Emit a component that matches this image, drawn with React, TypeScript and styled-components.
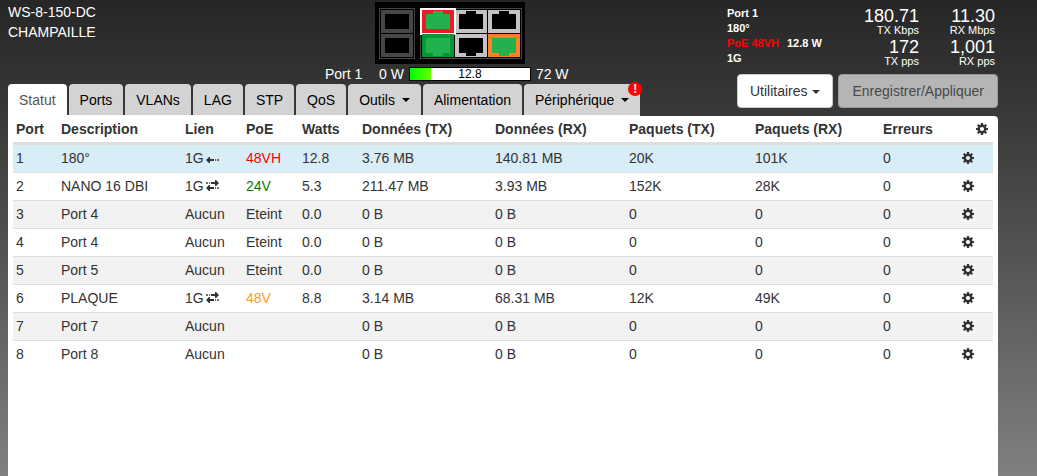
import React from "react";
import styled, { createGlobalStyle } from "styled-components";

const GlobalStyle = createGlobalStyle`
  *, *::before, *::after { box-sizing: border-box; }
  html { height: 100%; }
  body {
    margin: 0;
    min-height: 100%;
    background: linear-gradient(to bottom, #262626 0%, #3a3a3a 25%, #525252 52%, #808080 100%) fixed;
    color: #333;
    font-family: "Liberation Sans", Arial, Helvetica, sans-serif;
    font-size: 14px;
    line-height: 20px;
  }
`;

const Page = styled.div`
  display: flex;
  flex-direction: column;
  min-height: 100vh;
  padding: 0 39px 0 8px;
`;

const Header = styled.header`
  display: flex;
  justify-content: space-between;
  color: #fff;
`;

const HeaderMain = styled.div`
  display: flex;
  flex-direction: column;
  justify-content: space-between;
`;

const HeaderTop = styled.div`
  display: flex;
  padding-top: 2px;
`;

const Device = styled.div`
  flex: 0 0 317px;
`;

const PortMap = styled.svg`
  display: block;
  margin-left: 50px;
`;

const GaugeRow = styled.div`
  display: flex;
  align-items: center;
  gap: 5px;
`;

const GaugePort = styled.span`
  width: 49px;
`;

const Gauge = styled.div`
  position: relative;
  width: 122px;
  height: 14px;
  border: 1px solid #000;
  background: #fff;
`;

const GaugeFill = styled.div`
  height: 100%;
  background: linear-gradient(to right, #00ff00, #66ff00);
`;

const GaugeValue = styled.span`
  position: absolute;
  inset: 0;
  color: #000;
  font-size: 12px;
  line-height: 12px;
  text-align: center;
`;

const Tabs = styled.nav`
  display: flex;
  gap: 2px;
  border-bottom: 1px solid #fff;
`;

const Tab = styled.a<{ $active?: boolean }>`
  position: relative;
  display: flex;
  align-items: center;
  height: 31px;
  padding: 0 11px;
  border-radius: 4px 4px 0 0;
  background: ${(p) => (p.$active ? "#fff" : "#d3d3d3")};
  color: ${(p) => (p.$active ? "#555" : "#000")};
  text-decoration: none;
  white-space: nowrap;
`;

const Caret = styled.span<{ $gap: number }>`
  display: inline-block;
  margin-left: ${(p) => p.$gap}px;
  border-top: 4px solid currentColor;
  border-left: 4px solid transparent;
  border-right: 4px solid transparent;
  vertical-align: middle;
`;

const Alert = styled.span`
  position: absolute;
  top: -2px;
  right: -2px;
  width: 14px;
  height: 14px;
  border-radius: 50%;
  background: #f00;
  color: #fff;
  font-size: 12px;
  font-weight: bold;
  line-height: 14px;
  text-align: center;
`;

const Aside = styled.div`
  flex: 0 0 271px;
  display: flex;
  flex-direction: column;
  gap: 6px;
  padding: 6px 0 8px;
`;

const Summary = styled.div`
  display: flex;
  padding-right: 3px;
`;

const PortInfo = styled.div`
  flex: 1;
  font-size: 11px;
  font-weight: bold;
  line-height: 15px;
`;

const PoeLabel = styled.span`
  margin-right: 8px;
  color: #f00;
`;

const Stats = styled.div`
  width: 76px;
  text-align: right;
`;

const StatValue = styled.div`
  font-size: 18px;
  line-height: 20px;
`;

const StatUnit = styled.div`
  margin-bottom: 3px;
  font-size: 11px;
  line-height: 8px;
`;

const Actions = styled.div`
  display: flex;
  justify-content: flex-end;
  gap: 5px;
`;

const Button = styled.button`
  height: 34px;
  padding: 0 12px;
  border: 1px solid #ccc;
  border-radius: 4px;
  background: #fff;
  color: #333;
  font: inherit;
  white-space: nowrap;

  &:disabled {
    padding: 0 13px;
    border-color: #999;
    background: #b5b5b5;
    color: #484848;
  }
`;

const Panel = styled.main`
  flex: 1;
  padding: 0 5px;
  border-top-right-radius: 4px;
  background: #fff;
`;

const Table = styled.table`
  width: 100%;
  table-layout: fixed;
  border-collapse: separate;
  border-spacing: 0;
`;

const Th = styled.th`
  padding: 3px;
  border-bottom: 3px solid #ddd;
  text-align: left;
  white-space: nowrap;
`;

const GearTh = styled(Th)`
  padding-right: 5px;
  text-align: right;
`;

const Td = styled.td<{ $tone?: string }>`
  padding: 3px 3px 4px;
  border-top: 1px solid #ddd;
  color: ${(p) => p.$tone ?? "inherit"};
  white-space: nowrap;
`;

const Row = styled.tr<{ $selected?: boolean }>`
  background: ${(p) => (p.$selected ? "#d9edf7" : "#fff")};

  &:nth-child(odd) {
    background: ${(p) => (p.$selected ? "#d9edf7" : "#f2f2f2")};
  }

  &:first-child > td {
    border-top-width: 0;
  }
`;

const IconButton = styled.button`
  display: inline-block;
  height: 12px;
  padding: 0;
  border: 0;
  background: none;
  color: #333;
  line-height: 0;
  vertical-align: -1px;
`;

const LinkSvg = styled.svg`
  margin-left: 2px;
  vertical-align: baseline;
`;

function Gear({ label }: { label: string }) {
  return (
    <IconButton type="button" aria-label={label}>
      <svg width="12" height="12" viewBox="0 0 12 12" fill="none" stroke="currentColor">
        <circle cx="6" cy="6" r="3.3" strokeWidth="2.4" />
        <path
          strokeWidth="2.2"
          d="M6 0v2M6 10v2M0 6h2M10 6h2M1.7 1.7l1.5 1.5M8.8 8.8l1.5 1.5M1.7 10.3l1.5-1.5M8.8 3.2l1.5-1.5"
        />
      </svg>
    </IconButton>
  );
}

function Traffic({ both }: { both: boolean }) {
  return (
    <LinkSvg width="13" height="11" viewBox="0 0 13 11" fill="#333" aria-hidden="true">
      {both && (
        <>
          <path d="M0 2h2v2H0zM3 2h1v2H3z" opacity=".7" />
          <path d="M5 2h4V0h1l3 3-3 3H9V4H5z" />
        </>
      )}
      <path d="M8 7H4V5H3L0 8l3 3h1V9h4z" />
      <path d="M9 7h1v2H9zM11 7h2v2h-2z" opacity=".7" />
    </LinkSvg>
  );
}

type Jack = { x: number; y: number; frame: string; hole: string; selected?: boolean };

const jacks: Jack[] = [
  { x: 113, y: 8, frame: "#c3c3c3", hole: "#000" },
  { x: 80, y: 8, frame: "#c3c3c3", hole: "#000" },
  { x: 47, y: 8, frame: "#ed1c24", hole: "#22b14c", selected: true },
  { x: 47, y: 32, frame: "#009933", hole: "#22b14c" },
  { x: 80, y: 32, frame: "#c3c3c3", hole: "#000" },
  { x: 113, y: 32, frame: "#ff7f27", hole: "#22b14c" },
];

function Ports() {
  return (
    <PortMap width="150" height="62" viewBox="0 0 150 62" role="img" aria-label="Ports">
      <rect width="150" height="62" fill="#000" />
      <rect x="4.5" y="6.5" width="35" height="50" fill="none" stroke="#464646" />
      <rect x="45.5" y="6.5" width="101" height="50" fill="none" stroke="#464646" />
      {[8, 32].map((y) => (
        <g key={y}>
          <rect x="6" y={y} width="32" height="23" fill="#464646" />
          <rect x="10" y={y + 4} width="24" height="15" fill="#000" />
        </g>
      ))}
      {jacks.map((j) => (
        <g key={`${j.x}-${j.y}`}>
          {j.selected && <rect x={j.x - 2} y={j.y - 2} width="36" height="27" fill="#fff" />}
          <rect x={j.x} y={j.y} width="32" height="23" fill={j.frame} />
          <rect x={j.x + 4} y={j.y + 4} width="24" height="15" fill={j.hole} />
          <rect x={j.x + 11} y={j.y === 8 ? j.y + 1 : j.y + 19} width="10" height="3" fill={j.hole} />
        </g>
      ))}
    </PortMap>
  );
}

const tabs = [
  { name: "Statut", active: true },
  { name: "Ports" },
  { name: "VLANs" },
  { name: "LAG" },
  { name: "STP" },
  { name: "QoS" },
  { name: "Outils", menu: true },
  { name: "Alimentation" },
  { name: "Périphérique", menu: true, alert: true },
];

const columns: [string, number][] = [
  ["Port", 45],
  ["Description", 124],
  ["Lien", 61],
  ["PoE", 56],
  ["Watts", 60],
  ["Données (TX)", 133],
  ["Données (RX)", 134],
  ["Paquets (TX)", 126],
  ["Paquets (RX)", 128],
  ["Erreurs", 79],
];

type PortRow = {
  name: string;
  link: string;
  traffic?: "rx" | "both";
  poe: string;
  tone?: string;
  watts: string;
  data: [string, string];
  packets: [string, string];
};

const idle = (name: string, poe: string, watts: string): PortRow => ({
  name,
  link: "Aucun",
  poe,
  watts,
  data: ["0 B", "0 B"],
  packets: ["0", "0"],
});

const rows: PortRow[] = [
  { name: "180°", link: "1G", traffic: "rx", poe: "48VH", tone: "#f00", watts: "12.8", data: ["3.76 MB", "140.81 MB"], packets: ["20K", "101K"] },
  { name: "NANO 16 DBI", link: "1G", traffic: "both", poe: "24V", tone: "#008000", watts: "5.3", data: ["211.47 MB", "3.93 MB"], packets: ["152K", "28K"] },
  idle("Port 4", "Eteint", "0.0"),
  idle("Port 4", "Eteint", "0.0"),
  idle("Port 5", "Eteint", "0.0"),
  { name: "PLAQUE", link: "1G", traffic: "both", poe: "48V", tone: "#ff9c1a", watts: "8.8", data: ["3.14 MB", "68.31 MB"], packets: ["12K", "49K"] },
  idle("Port 7", "", ""),
  idle("Port 8", "", ""),
];

export default function App() {
  const watts = 12.8;
  const maxWatts = 72;
  return (
    <>
      <GlobalStyle />
      <Page>
        <Header>
          <HeaderMain>
            <HeaderTop>
              <Device>
                <div>WS-8-150-DC</div>
                <div>CHAMPAILLE</div>
              </Device>
              <div>
                <Ports />
                <GaugeRow>
                  <GaugePort>Port 1</GaugePort>
                  <span>0 W</span>
                  <Gauge role="meter" aria-label="Port 1" aria-valuemin={0} aria-valuemax={maxWatts} aria-valuenow={watts}>
                    <GaugeFill style={{ width: `${(watts / maxWatts) * 100}%` }} />
                    <GaugeValue>{watts}</GaugeValue>
                  </Gauge>
                  <span>72 W</span>
                </GaugeRow>
              </div>
            </HeaderTop>
            <Tabs>
              {tabs.map((t) => (
                <Tab key={t.name} href="#" $active={t.active}>
                  {t.name}
                  {t.menu && <Caret $gap={7} />}
                  {t.alert && <Alert>!</Alert>}
                </Tab>
              ))}
            </Tabs>
          </HeaderMain>
          <Aside>
            <Summary>
              <PortInfo>
                <div>Port 1</div>
                <div>180°</div>
                <div>
                  <PoeLabel>PoE 48VH</PoeLabel>12.8 W
                </div>
                <div>1G</div>
              </PortInfo>
              <Stats>
                <StatValue>180.71</StatValue>
                <StatUnit>TX Kbps</StatUnit>
                <StatValue>172</StatValue>
                <StatUnit>TX pps</StatUnit>
              </Stats>
              <Stats>
                <StatValue>11.30</StatValue>
                <StatUnit>RX Mbps</StatUnit>
                <StatValue>1,001</StatValue>
                <StatUnit>RX pps</StatUnit>
              </Stats>
            </Summary>
            <Actions>
              <Button type="button">
                Utilitaires
                <Caret $gap={5} />
              </Button>
              <Button type="button" disabled>
                Enregistrer/Appliquer
              </Button>
            </Actions>
          </Aside>
        </Header>
        <Panel>
          <Table>
            <colgroup>
              {columns.map(([name, width]) => (
                <col key={name} width={width} />
              ))}
              <col width={34} />
            </colgroup>
            <thead>
              <tr>
                {columns.map(([name]) => (
                  <Th key={name}>{name}</Th>
                ))}
                <GearTh>
                  <Gear label="Colonnes" />
                </GearTh>
              </tr>
            </thead>
            <tbody>
              {rows.map((r, i) => (
                <Row key={i} $selected={i === 0}>
                  <Td>{i + 1}</Td>
                  <Td>{r.name}</Td>
                  <Td>
                    {r.link}
                    {r.traffic && <Traffic both={r.traffic === "both"} />}
                  </Td>
                  <Td $tone={r.tone}>{r.poe}</Td>
                  <Td>{r.watts}</Td>
                  <Td>{r.data[0]}</Td>
                  <Td>{r.data[1]}</Td>
                  <Td>{r.packets[0]}</Td>
                  <Td>{r.packets[1]}</Td>
                  <Td>0</Td>
                  <Td>
                    <Gear label={`Port ${i + 1}`} />
                  </Td>
                </Row>
              ))}
            </tbody>
          </Table>
        </Panel>
      </Page>
    </>
  );
}
